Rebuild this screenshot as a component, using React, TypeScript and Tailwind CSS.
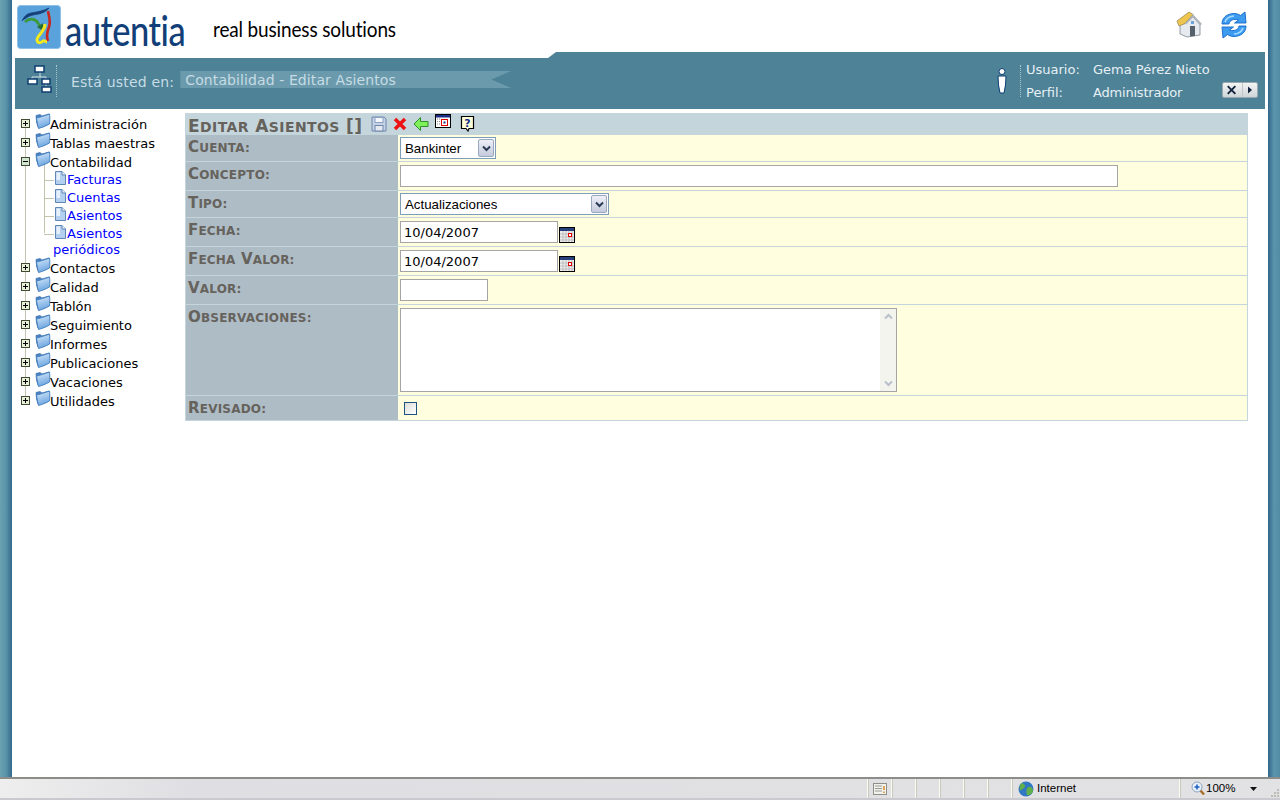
import React from "react";

const SANS = "font-['DejaVu_Sans',Verdana,sans-serif]";

// old-browser style small caps: the lower case letters are only a bit smaller than the capitals
function Caps({ text, big, small }: { text: string; big: string; small: string }) {
  const parts = text.match(/[a-z:]+|[^a-z:]+/g) ?? [];
  return (
    <>
      {parts.map((p, i) =>
        /^[a-z:]/.test(p) ? (
          <span key={i} className={`uppercase ${small}`}>
            {p}
          </span>
        ) : (
          <span key={i} className={big}>
            {p}
          </span>
        ),
      )}
    </>
  );
}

function Folder() {
  return (
    <svg width="17" height="17" viewBox="0 0 17 17" className="shrink-0">
      <defs>
        <linearGradient id="fld" x1="0" y1="0" x2="0.3" y2="1">
          <stop offset="0" stopColor="#d9ebfb" />
          <stop offset="1" stopColor="#6ea6e0" />
        </linearGradient>
      </defs>
      <path d="M1 2.5 L5 1.5 L7 3 L14 1 L13.5 8 L3 14 L1.5 9 Z" fill="#4a82c4" stroke="#3a6ea8" strokeWidth="0.7" />
      <path d="M1.5 5 C4 4.5 9 3 14.5 1 C15 4 14.8 8 14.5 11 C11 13 7 14.5 3.5 15.5 C2.5 12 2 8 1.5 5 Z" fill="url(#fld)" stroke="#3f7dbd" strokeWidth="0.9" />
    </svg>
  );
}

function Doc() {
  return (
    <svg width="11" height="14" viewBox="0 0 11 14" className="shrink-0">
      <path d="M0.5 0.5 H7 L10.5 4 V13.5 H0.5 Z" fill="#b4d0f0" stroke="#5f86b5" strokeWidth="1" />
      <path d="M7 0.5 V4 H10.5" fill="#eef5fc" stroke="#5f86b5" strokeWidth="1" />
      <path d="M1.5 1.5 H5 V9 H1.5 Z" fill="#e6f0fb" />
    </svg>
  );
}

function Expander({ open }: { open?: boolean }) {
  return (
    <svg width="9" height="9" viewBox="0 0 9 9" className="shrink-0">
      <rect x="0.5" y="0.5" width="8" height="8" fill={open ? "#d2e6d2" : "#e8f0d8"} stroke="#3f4c33" />
      <path d="M2 4.5 H7" stroke="#000" />
      {!open && <path d="M4.5 2 V7" stroke="#000" />}
    </svg>
  );
}

function TreeRow({ label, open }: { label: string; open?: boolean }) {
  return (
    <div className="relative flex h-[19px] items-center pl-[21px]">
      <span className="-mt-[2px]">
        <Expander open={open} />
      </span>
      <span className="ml-[5px] -mt-[6px]">
        <Folder />
      </span>
      <span className="ml-[-2px] whitespace-nowrap text-[13px] text-black">{label}</span>
    </div>
  );
}

function TreeLeaf({ label, rest }: { label: string; rest?: string }) {
  return (
    <div className="relative pl-[53px] text-[13px] text-[#0000ff]">
      <div className="flex h-[18px] items-center">
        <span className="ml-[2px] -mt-[4px]">
          <Doc />
        </span>
        <span className="ml-px whitespace-nowrap">{label}</span>
      </div>
      {rest && <div className="h-[16px] leading-[14px]">{rest}</div>}
      <span className="absolute left-[44px] top-[9px] h-px w-[10px] bg-[#c4c4ae]" />
    </div>
  );
}

function Row({
  label,
  h,
  children,
}: {
  label: string;
  h: string;
  children: React.ReactNode;
}) {
  return (
    <div className={`flex border-b border-[#c5d5dc] ${h}`}>
      <div className="w-[212px] shrink-0 bg-[#aebcc6] pl-[2px] pt-[3px] font-bold leading-[18px] tracking-[0.2px] text-[#66625c]">
        <Caps text={label} big="text-[15px]" small="text-[12px]" />
      </div>
      <div className="flex flex-1 items-start bg-[#ffffe0] pl-[2px]">{children}</div>
    </div>
  );
}

function Calendar() {
  return (
    <svg width="16" height="16" viewBox="0 0 16 16" className="shrink-0">
      <rect x="0.5" y="0.5" width="15" height="15" fill="#f0f0f0" stroke="#000" />
      <rect x="1" y="1" width="14" height="3" fill="#27407c" />
      <path d="M1 7 H15 M1 10 H15 M1 13 H15 M4 4 V15 M7 4 V15 M10 4 V15 M13 4 V15" stroke="#bdbdbd" strokeWidth="1" />
      <rect x="9.5" y="6.5" width="3" height="3" fill="#fff" stroke="#e00000" />
    </svg>
  );
}

function SelectBox({ value, w }: { value: string; w: string }) {
  return (
    <div className={`mt-[2px] flex h-[22px] items-center justify-between border border-[#7f9db9] bg-white ${w}`}>
      <span className="pl-[4px] pt-[2px] font-['Liberation_Sans',Arial,sans-serif] text-[13.3px] leading-none text-black">
        {value}
      </span>
      <span className="mr-px flex h-[18px] w-[16px] items-center justify-center rounded-[2px] border border-[#9aa7c0] bg-gradient-to-b from-[#eef0f8] to-[#c5cbdc]">
        <svg width="9" height="7" viewBox="0 0 9 7">
          <path d="M1 1.5 L4.5 5 L8 1.5" fill="none" stroke="#2b3a55" strokeWidth="2" />
        </svg>
      </span>
    </div>
  );
}

function TextBox({ value, w }: { value?: string; w: string }) {
  return (
    <div className={`mt-[3px] flex h-[22px] items-center border border-[#a5a5a5] bg-white pl-[3px] pt-[2px] text-[13px] text-black ${w}`}>
      {value}
    </div>
  );
}

function Logo() {
  return (
    <svg width="44" height="44" viewBox="0 0 44 44" className="shrink-0">
      <rect x="0.5" y="0.5" width="43" height="43" rx="3" fill="#5aa2dc" stroke="#8fbfe3" />
      <path d="M5 16 C7 12 9 9 14 8 C20 7 26 6 32 3 C28 8 22 9 16 10 C12 11 10 12 8 14" fill="#16407a" stroke="#16407a" strokeWidth="0.8" />
      <path d="M8 17 C12 13 18 13 21 18 L24 23" fill="none" stroke="#3b9a3a" strokeWidth="2.6" />
      <path d="M20 22 L26 18 L26 26 Z" fill="#2c6d3a" />
      <path d="M31 6 C32 12 34 16 32 22 C30 27 29 31 31 36" fill="none" stroke="#c8281e" strokeWidth="2.6" />
      <path d="M28 19 C28 26 21 30 20 34 C20 39 24 38 26 36 C27 35 29 37 30 37" fill="none" stroke="#f2e81e" strokeWidth="3" />
    </svg>
  );
}

function HomeIcon() {
  return (
    <svg width="27" height="27" viewBox="0 0 27 27">
      <path d="M4 14 L9 12 L17 4 L24 13 V24 L11 26 L4 23 Z" fill="#e6eaee" stroke="#7c8690" strokeWidth="0.8" />
      <path d="M1 10 L13 1 L17 3.5 L9 12.5 L3 15 Z" fill="#eec64e" stroke="#9a8a55" strokeWidth="0.8" />
      <path d="M17 3.5 L26 13 L24 14.5 L17 6.5 L10 13.5 L9 12.5 Z" fill="#aeb4ba" />
      <path d="M14 15 H19 V25 L14 25.5 Z" fill="#56606a" />
      <path d="M15 10 H18 V13 H15 Z" fill="#6ea5d8" />
    </svg>
  );
}

function RefreshIcon() {
  return (
    <svg width="28" height="28" viewBox="0 0 28 28">
      <path d="M2 13 C2 6 8 2.5 14 2.5 C17 2.5 19 3.5 20.5 4.5 L25 1 L26 12 L14.5 12 L18.5 9 C14 7.5 9.5 9 9 13 Z" fill="#3d9bf0" stroke="#1266c8" strokeWidth="0.9" />
      <path d="M26 15 C26 22 20 25.5 14 25.5 C11 25.5 9 24.5 7.5 23.5 L3 27 L2 16 L13.5 16 L9.5 19 C14 20.5 18.5 19 19 15 Z" fill="#3d9bf0" stroke="#1266c8" strokeWidth="0.9" />
      <path d="M5 11 C6 7.5 10 5 14 5" fill="none" stroke="#a6dcff" strokeWidth="1.6" />
      <path d="M23 17 C22 20.5 18 23 14 23" fill="none" stroke="#a6dcff" strokeWidth="1.6" />
    </svg>
  );
}

function SiteMapIcon() {
  return (
    <svg width="26" height="30" viewBox="0 0 26 30" className="shrink-0">
      <path d="M13 8 V13 M5 13 H19 M5 13 V16 M19 13 V22" stroke="#d7e4ea" fill="none" />
      <rect x="8" y="2" width="9" height="6" fill="#fff" stroke="#0f3e72" strokeWidth="1.5" />
      <rect x="1" y="15" width="9" height="5" fill="#fff" stroke="#0f3e72" strokeWidth="1.5" />
      <rect x="15" y="15" width="8" height="5" fill="#fff" stroke="#0f3e72" strokeWidth="1.5" />
      <rect x="15" y="23" width="9" height="5" fill="#fff" stroke="#0f3e72" strokeWidth="1.5" />
    </svg>
  );
}

function ToolbarIcons() {
  return (
    <div className="ml-[9px] flex items-start">
      <svg width="16" height="16" viewBox="0 0 16 16" className="mt-[3px]">
        <path d="M1 1 H13 L15 3 V15 H1 Z" fill="#c4d2e6" stroke="#6f87ad" />
        <rect x="4" y="1.5" width="8" height="5" fill="#f3f6fb" stroke="#8ba0c0" />
        <rect x="4" y="9.5" width="8" height="5.5" fill="#e4e9f2" stroke="#6f87ad" />
      </svg>
      <svg width="14" height="14" viewBox="0 0 14 14" className="ml-[6px] mt-[4px]">
        <path d="M2 2 L12 12 M12 2 L2 12" stroke="#ee1111" strokeWidth="3.4" />
      </svg>
      <svg width="16" height="16" viewBox="0 0 16 16" className="ml-[6px] mt-[3px]">
        <path d="M7.5 1.5 L1 8 L7.5 14.5 V10.5 H15 V5.5 H7.5 Z" fill="#7ff05a" stroke="#2f8f2a" />
      </svg>
      <svg width="16" height="14" viewBox="0 0 16 14" className="ml-[6px] mt-px">
        <rect x="0.5" y="0.5" width="15" height="13" fill="#fff" stroke="#000" />
        <rect x="1" y="1" width="14" height="2.5" fill="#1c2f88" />
        <rect x="6.5" y="5.5" width="6" height="6" fill="#fff" stroke="#e00000" />
        <rect x="8.5" y="7.5" width="2" height="2" fill="#1c2f88" />
        <path d="M2 5 H5 M2 7.5 H5 M2 10 H5" stroke="#888" strokeDasharray="1 1" />
      </svg>
      <svg width="15" height="17" viewBox="0 0 15 17" className="ml-[9px] mt-[2px]">
        <path d="M1.5 1.5 H13.5 V13.5 H9 L8 16 L6 13.5 H1.5 Z" fill="#ffffd8" stroke="#000" strokeWidth="1.2" />
        <text x="7.5" y="11.5" textAnchor="middle" className="font-['DejaVu_Sans',sans-serif] text-[11px] font-bold" fill="#1c2f88">
          ?
        </text>
      </svg>
    </div>
  );
}

function StatusCell({ w, children }: { w: string; children?: React.ReactNode }) {
  return (
    <div className={`flex h-full items-center border-r border-[#fbfbf5] shadow-[1px_0_0_#c9c8bd] ${w}`}>{children}</div>
  );
}

function SideStrip({ right }: { right?: boolean }) {
  return (
    <div
      className={`w-[12px] shrink-0 bg-gradient-to-r ${
        right ? "from-[#31668a] via-[#5a95ab] to-[#4f8ba3]" : "from-[#6aa0b2] via-[#5a94a9] to-[#35698c]"
      }`}
    />
  );
}

export default function App() {
  return (
    <div className={`flex h-[800px] w-[1280px] flex-col overflow-hidden bg-white ${SANS}`}>
      <div className="flex min-h-0 flex-1">
        <SideStrip />
        <div className="flex-1 bg-white">
          {/* header */}
          <div className="flex h-[52px] items-start pl-[5px]">
            <div className="mt-[5px]">
              <Logo />
            </div>
            <span className="ml-[4px] mt-[5px] inline-block w-[118px] origin-left scale-x-[0.82] whitespace-nowrap font-['Lato',sans-serif] text-[42px] font-medium leading-[50px] tracking-[-0.6px] text-[#123f78]">
              autentia
            </span>
            <span className="ml-[30px] mt-[18px] inline-block scale-y-110 font-['Lato',sans-serif] text-[19px] leading-[22px] tracking-[-0.15px] text-black">
              real business solutions
            </span>
            <div className="ml-auto mr-[20px] mt-[11px] flex gap-[17px]">
              <HomeIcon />
              <RefreshIcon />
            </div>
          </div>

          {/* breadcrumb bar */}
          <div className="mx-[3px] flex h-[57px] items-start bg-[#4d8297] pt-[13px] text-[13px] [clip-path:polygon(0_6px,533px_6px,541px_0,100%_0,100%_100%,0_100%)]">
            <div className="ml-[12px] mt-[-1px]">
              <SiteMapIcon />
            </div>
            <div className="ml-[3px] h-[32px] border-l border-dotted border-[#a8c8d4]" />
            <span className="ml-[14px] mt-[7px] whitespace-nowrap text-[14px] tracking-[0.2px] text-[#c7dce4]">Está usted en:</span>
            <div className="ml-[6px] mt-[6px] flex h-[17px] w-[331px] items-center bg-[#6a9aac] pl-[5px] pt-[2px] text-[14px] tracking-[0.1px] text-[#c7dce4] [clip-path:polygon(0_0,100%_0,94%_50%,100%_100%,0_100%)]">
              <span className="whitespace-nowrap">Contabilidad - Editar Asientos</span>
            </div>
            <div className="ml-auto mr-[7px] flex items-start">
              <svg width="12" height="26" viewBox="0 0 12 26" className="mr-[12px] mt-[3px]">
                <circle cx="6" cy="3.5" r="3" fill="#fff" stroke="#0f3e72" />
                <path d="M2 8 H10 L9.5 17 L8 25 H4 L2.5 17 Z" fill="#fff" stroke="#0f3e72" />
              </svg>
              <div className="h-[32px] border-l border-dotted border-[#a8c8d4]" />
              <div className="ml-[5px] w-[232px] text-[#e6f0f4]">
                <div className="-mt-[7px] flex h-[23px] items-center">
                  <span className="w-[67px]">Usuario:</span>
                  <span className="whitespace-nowrap">Gema Pérez Nieto</span>
                </div>
                <div className="flex h-[23px] items-center">
                  <span className="w-[67px]">Perfil:</span>
                  <span className="whitespace-nowrap tracking-[-0.2px]">Administrador</span>
                  <div className="ml-auto -mt-[6px] flex h-[16px] w-[36px] items-center rounded-[2px] border border-[#99a9b2] bg-gradient-to-b from-[#f4f4f4] to-[#cfd5d8]">
                    <svg width="20" height="14" viewBox="0 0 20 14" className="border-r border-[#bfc6ca]">
                      <path d="M5 3 L13 11 M13 3 L5 11" stroke="#12233d" strokeWidth="2" />
                    </svg>
                    <svg width="14" height="14" viewBox="0 0 14 14">
                      <path d="M5 3.5 L9 7 L5 10.5 Z" fill="#12233d" />
                    </svg>
                  </div>
                </div>
              </div>
            </div>
          </div>

          {/* body */}
          <div className="flex">
            <div className="relative w-[173px] shrink-0 pt-[6px]">
              <span className="absolute left-[13px] top-[15px] h-[276px] w-px bg-[#c4c4ae]" />
              <div className="relative -ml-[12px]">
                <span className="absolute left-[44px] top-[48px] h-[70px] w-px bg-[#c4c4ae]" />
                <TreeRow label="Administración" />
                <TreeRow label="Tablas maestras" />
                <TreeRow label="Contabilidad" open />
                <div className="-mt-[1px]">
                  <TreeLeaf label="Facturas" />
                  <TreeLeaf label="Cuentas" />
                  <TreeLeaf label="Asientos" />
                  <TreeLeaf label="Asientos" rest="periódicos" />
                </div>
                <TreeRow label="Contactos" />
                <TreeRow label="Calidad" />
                <TreeRow label="Tablón" />
                <TreeRow label="Seguimiento" />
                <TreeRow label="Informes" />
                <TreeRow label="Publicaciones" />
                <TreeRow label="Vacaciones" />
                <TreeRow label="Utilidades" />
              </div>
            </div>

            <div className="mt-[4px] w-[1063px] shrink-0 border-x border-[#c5d5dc]">
              <div className="flex h-[22px] items-start bg-[#c5d5dc] pl-[2px]">
                <span className="mt-[1px] font-bold leading-[24px] tracking-[0.4px] text-[#66625c]">
                  <Caps text="Editar Asientos []" big="text-[17px]" small="text-[14px]" />
                </span>
                <ToolbarIcons />
              </div>
              <Row label="Cuenta:" h="h-[27px]">
                <SelectBox value="Bankinter" w="w-[96px]" />
              </Row>
              <Row label="Concepto:" h="h-[29px]">
                <TextBox w="w-[718px]" />
              </Row>
              <Row label="Tipo:" h="h-[27px]">
                <SelectBox value="Actualizaciones" w="w-[209px]" />
              </Row>
              <Row label="Fecha:" h="h-[29px]">
                <TextBox value="10/04/2007" w="w-[158px]" />
                <span className="ml-px mt-[9px]">
                  <Calendar />
                </span>
              </Row>
              <Row label="Fecha Valor:" h="h-[29px]">
                <TextBox value="10/04/2007" w="w-[158px]" />
                <span className="ml-px mt-[9px]">
                  <Calendar />
                </span>
              </Row>
              <Row label="Valor:" h="h-[29px]">
                <TextBox w="w-[88px]" />
              </Row>
              <Row label="Observaciones:" h="h-[91px]">
                <div className="mt-[3px] flex h-[84px] w-[497px] justify-end border border-[#a5a5a5] bg-white">
                  <div className="flex w-[16px] flex-col items-center justify-between bg-[#f4f4ee] py-[4px]">
                    <svg width="9" height="7" viewBox="0 0 9 7">
                      <path d="M1 5.5 L4.5 2 L8 5.5" fill="none" stroke="#b9c0cc" strokeWidth="2" />
                    </svg>
                    <svg width="9" height="7" viewBox="0 0 9 7">
                      <path d="M1 1.5 L4.5 5 L8 1.5" fill="none" stroke="#b9c0cc" strokeWidth="2" />
                    </svg>
                  </div>
                </div>
              </Row>
              <Row label="Revisado:" h="h-[25px]">
                <div className="ml-[4px] mt-[6px] h-[13px] w-[13px] border border-[#1c5180] bg-gradient-to-br from-[#dcdcd7] to-white" />
              </Row>
            </div>
          </div>
        </div>
        <SideStrip right />
      </div>

      {/* status bar */}
      <div className="flex h-[23px] shrink-0 items-center border-t-2 border-b-2 border-t-[#8c8c88] border-b-[#c9c9cf] bg-gradient-to-r from-[#eeeeee] via-[#dfdfe3] via-15% to-[#e2e2e4] text-[11px] text-black">
        <div className="w-[844px]" />
        <StatusCell w="w-[24px]" />
        <StatusCell w="w-[24px]">
          <svg width="14" height="12" viewBox="0 0 14 12" className="ml-[5px]">
            <rect x="0.5" y="0.5" width="13" height="11" fill="#f2f2ec" stroke="#8f8f8a" />
            <path d="M2 3 H9 M2 5.5 H9 M2 8 H9" stroke="#9a9a94" />
            <path d="M11 3 V7 M11 8.5 V10" stroke="#d8841a" strokeWidth="1.4" />
          </svg>
        </StatusCell>
        <StatusCell w="w-[24px]" />
        <StatusCell w="w-[24px]" />
        <StatusCell w="w-[24px]" />
        <StatusCell w="w-[24px]" />
        <StatusCell w="w-[24px]" />
        <StatusCell w="w-[168px]">
          <svg width="16" height="16" viewBox="0 0 16 16" className="ml-[6px]">
            <circle cx="8" cy="8" r="7.5" fill="#2f78c4" />
            <path d="M4 2 C7 3 8 5 6 7 C4 8 3 10 2 9 C1 6 2 3 4 2 Z M10 6 C13 5 15 7 15 10 C14 13 11 15 9 14 C8 11 8 8 10 6 Z" fill="#62b04a" />
          </svg>
          <span className="ml-[3px] font-['Liberation_Sans',Arial,sans-serif] text-[11.5px]">Internet</span>
        </StatusCell>
        <div className="flex h-full flex-1 items-center">
          <svg width="14" height="15" viewBox="0 0 14 15" className="ml-[11px]">
            <path d="M9 9 L13 13.5" stroke="#a86a22" strokeWidth="2.4" />
            <circle cx="6" cy="6" r="5" fill="#e6f1fb" stroke="#8ea4bd" />
            <path d="M3.5 6 H8.5 M6 3.5 V8.5" stroke="#1f5fc4" strokeWidth="1.6" />
          </svg>
          <span className="ml-[1px] font-['Liberation_Sans',Arial,sans-serif] text-[11.5px]">100%</span>
          <svg width="7" height="4" viewBox="0 0 7 4" className="ml-[15px]">
            <path d="M0 0 H7 L3.5 4 Z" fill="#111" />
          </svg>
          <svg width="11" height="11" viewBox="0 0 11 11" className="ml-auto mt-[7px]">
            <path d="M8 2 H10 V4 H8 Z M5 5 H7 V7 H5 Z M8 5 H10 V7 H8 Z M2 8 H4 V10 H2 Z M5 8 H7 V10 H5 Z M8 8 H10 V10 H8 Z" fill="#bdbdb6" />
          </svg>
        </div>
      </div>
    </div>
  );
}
